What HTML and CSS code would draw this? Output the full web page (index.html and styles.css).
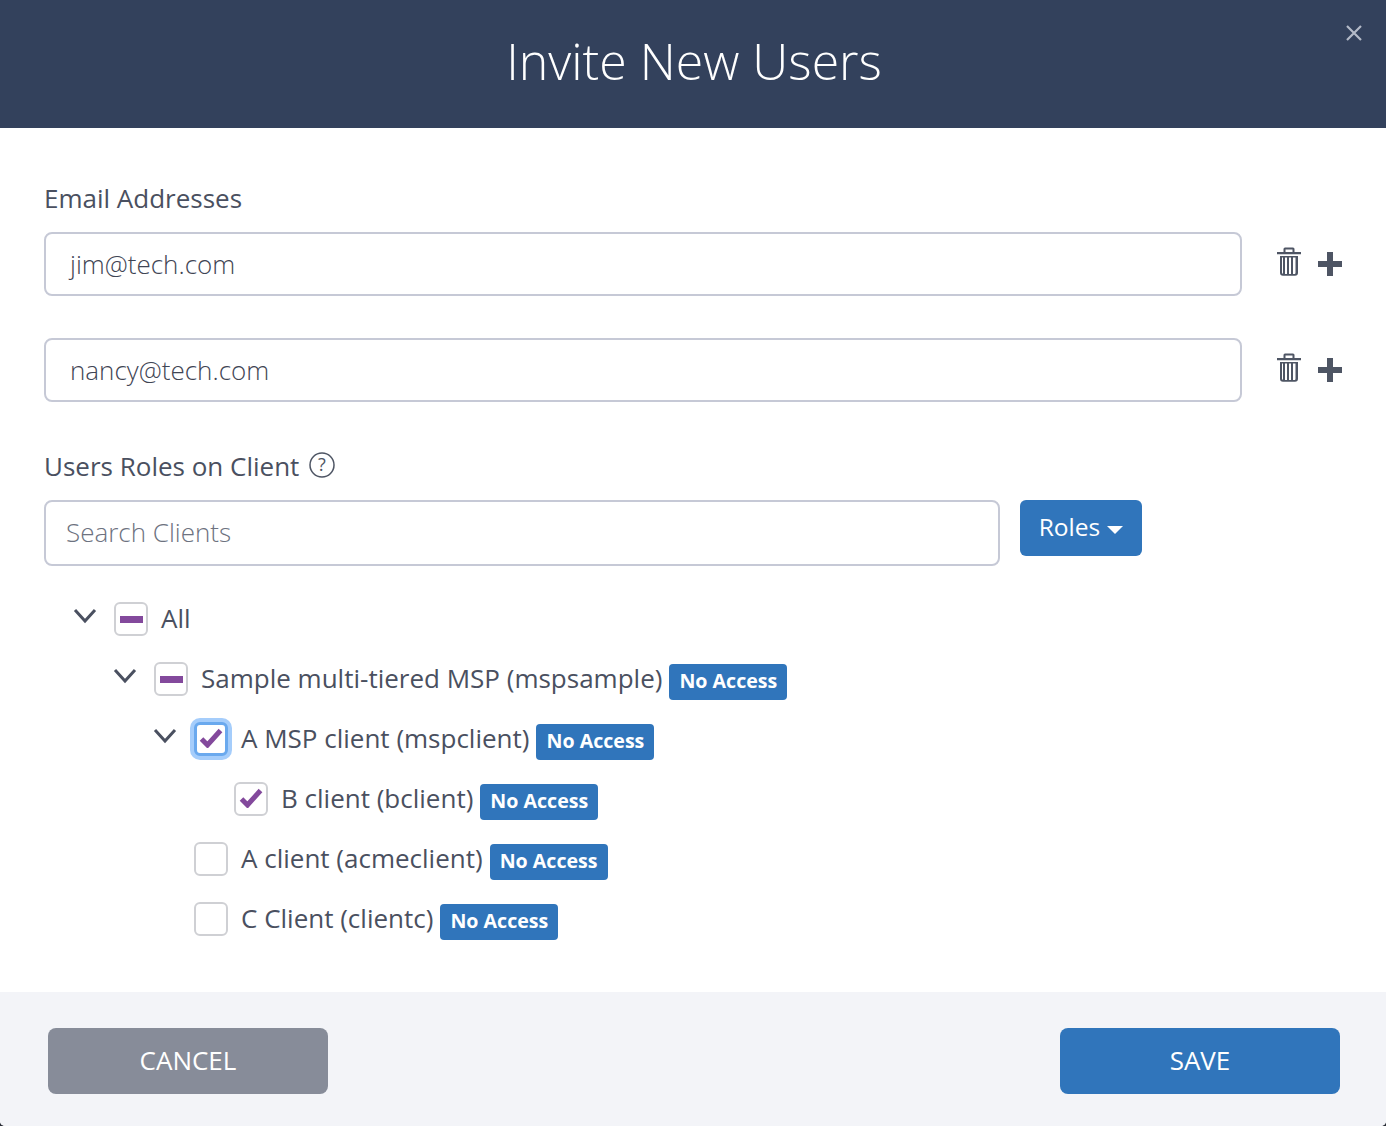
FILE: index.html
```html
<!DOCTYPE html>
<html lang="en">
<head>
<meta charset="utf-8">
<title>Invite New Users</title>
<link rel="stylesheet" href="styles.css">
</head>
<body>
<div class="modal">
  <header class="modal-head">
    <h1>Invite New Users</h1>
    <button class="close" aria-label="Close"><svg viewBox="0 0 16 16" width="16" height="16"><path d="M1 1L15 15M15 1L1 15"/></svg></button>
  </header>
  <main class="modal-body">
    <label class="field-label label-email">Email Addresses</label>
    <div class="email-row">
      <div class="input email-input">jim@tech.com</div>
      <svg class="trash" viewBox="0 0 24 30" width="24" height="30"><use href="#i-trash"/></svg>
      <svg class="plus" viewBox="0 0 24 24" width="24" height="24"><path d="M9 0h6v9h9v6h-9v9H9v-9H0V9h9z"/></svg>
    </div>
    <div class="email-row">
      <div class="input email-input">nancy@tech.com</div>
      <svg class="trash" viewBox="0 0 24 30" width="24" height="30"><use href="#i-trash"/></svg>
      <svg class="plus" viewBox="0 0 24 24" width="24" height="24"><path d="M9 0h6v9h9v6h-9v9H9v-9H0V9h9z"/></svg>
    </div>
    <div class="field-label label-roles">Users Roles on Client
      <svg class="help" viewBox="0 0 26 26" width="26" height="26"><circle cx="13" cy="13" r="12"/><text x="13" y="19" text-anchor="middle">?</text></svg>
    </div>
    <div class="search-row">
      <div class="input search-input">Search Clients</div>
      <button class="roles-btn">Roles<span class="caret"></span></button>
    </div>
    <ul class="tree">
      <li class="node lvl0"><svg class="chev" viewBox="0 0 24 16" width="24" height="16"><path d="M2 2l10 11L22 2"/></svg><span class="cb"><span class="dash"></span></span><span class="name">All</span></li>
      <li class="node lvl1"><svg class="chev" viewBox="0 0 24 16" width="24" height="16"><path d="M2 2l10 11L22 2"/></svg><span class="cb"><span class="dash"></span></span><span class="name">Sample multi-tiered MSP (mspsample)</span><span class="badge">No Access</span></li>
      <li class="node lvl2"><svg class="chev" viewBox="0 0 24 16" width="24" height="16"><path d="M2 2l10 11L22 2"/></svg><span class="cb focus"><svg class="tick" viewBox="0 0 24 20" width="24" height="20"><path d="M2.500 11l6 6L21.500 2.500"/></svg></span><span class="name">A MSP client (mspclient)</span><span class="badge">No Access</span></li>
      <li class="node lvl3"><span class="cb"><svg class="tick" viewBox="0 0 24 20" width="24" height="20"><path d="M2.500 11l6 6L21.500 2.500"/></svg></span><span class="name">B client (bclient)</span><span class="badge">No Access</span></li>
      <li class="node lvl2b"><span class="cb"></span><span class="name">A client (acmeclient)</span><span class="badge">No Access</span></li>
      <li class="node lvl2b"><span class="cb"></span><span class="name">C Client (clientc)</span><span class="badge">No Access</span></li>
    </ul>
  </main>
  <footer class="modal-foot">
    <button class="btn btn-cancel">CANCEL</button>
    <button class="btn btn-save">SAVE</button>
  </footer>
</div>
<svg class="defs" width="0" height="0" aria-hidden="true"><defs>
  <g id="i-trash">
    <path class="t-fill" d="M8 .5h8a1.500 1.500 0 0 1 1.500 1.500v3h6.500v2.200H0V5h6.500V2A1.500 1.500 0 0 1 8 .5zM8.500 2.500v2.500h7V2.500z" fill-rule="evenodd"/>
    <path class="t-fill" d="M3 9h18v16.700a3 3 0 0 1-3 3H6a3 3 0 0 1-3-3zM5 10.500V25.500a1.500 1.500 0 0 0 1 1.400V10.500zM8 10.500V27h2V10.500zM12 10.500V27h2V10.500zM16 10.500V27h2V10.500zM18.500 10.500V26.900a1.500 1.500 0 0 0 .5-1.400V10.500z" fill-rule="evenodd"/>
  </g>
</defs></svg>
</body>
</html>
```
FILE: styles.css
```css
* { box-sizing: border-box; }
html, body { margin: 0; padding: 0; background: #2b2f38; }
body { font-family: "Open Sans", "Liberation Sans", sans-serif; color: #4a5060; width: 1386px; height: 1126px; overflow: hidden; }
.defs { position: absolute; }
.t-fill { fill: #4e5564; }

.modal { width: 1386px; height: 1126px; display: flex; flex-direction: column; background: #fff; border-radius: 0 0 5px 5px; }
.modal-head { position: relative; height: 128px; flex: none; background: #33415c; display: flex; align-items: center; justify-content: center; }
.modal-head h1 { margin: 0 0 6px 2px; font-size: 50px; font-weight: 300; line-height: 68px; color: #fff; }
.close { position: absolute; right: 24px; top: 25px; padding: 0; border: 0; background: none; width: 16px; height: 16px; display: block; }
.close svg { display: block; fill: none; stroke: #b4bac8; stroke-width: 2.200; }

.modal-body { flex: 1; padding: 0 44px; }
.field-label { font-size: 26px; line-height: 36px; color: #4a5060; display: flex; align-items: center; }
.label-email { margin-top: 52px; margin-bottom: 16px; }
.label-roles { margin-top: 46px; margin-bottom: 16px; }
.help { margin-left: 10px; margin-top: -2px; fill: none; stroke: #4e5564; stroke-width: 1.500; }
.help text { font-size: 18px; fill: #4e5564; stroke: none; font-family: "Open Sans", sans-serif; }

.input { background: #fff; border: 2px solid #c6c9d6; border-radius: 8px; font-size: 26px; display: flex; align-items: center; }
.email-row { display: flex; align-items: center; margin-bottom: 42px; }
.email-input { width: 1198px; height: 64px; padding-left: 24px; font-weight: 300; color: #3f4554; }
.trash { margin-left: 35px; margin-top: -4px; }
.plus { margin-left: 17px; margin-top: 0; fill: #4e5564; }

.search-row { display: flex; align-items: flex-start; gap: 20px; }
.search-input { width: 956px; height: 66px; padding-left: 20px; padding-bottom: 2px; font-weight: 300; color: #6d7280; }
.roles-btn { width: 122px; height: 56px; border: 0; border-radius: 6px; background: #3075bb; color: #fff; font: 400 24.500px/36px "Open Sans", sans-serif; padding: 0 0 2px; display: flex; align-items: center; justify-content: center; }
.caret { width: 0; height: 0; margin-left: 7px; margin-top: 5px; border-left: 8px solid transparent; border-right: 8px solid transparent; border-top: 8px solid #fff; }

.tree { list-style: none; margin: 22px 0 0; padding: 0; }
.node { height: 60px; display: flex; align-items: flex-start; padding-top: 14px; }
.lvl0 { padding-left: 29px; }
.lvl1 { padding-left: 69px; }
.lvl2 { padding-left: 109px; }
.lvl3 { padding-left: 190px; }
.lvl2b { padding-left: 150px; }
.chev { flex: none; margin-top: 6px; margin-right: 17px; fill: none; stroke: #4a5060; stroke-width: 3; }
.cb { flex: none; width: 34px; height: 34px; border: 2px solid #cfd0d4; border-radius: 6px; background: #fff; display: flex; align-items: center; justify-content: center; }
.cb.focus { border: 3px solid #6aa9ee; box-shadow: 0 0 0 4px #a5cdfb; }
.dash { width: 23px; height: 7px; background: #83499c; margin-left: 1px; flex: none; }
.tick { fill: none; stroke: #83499c; stroke-width: 5; margin-top: -3px; flex: none; }
.name { font-size: 26px; line-height: 36px; margin-left: 13px; margin-top: -2px; color: #4a5060; }
.badge { height: 36px; margin-left: 7px; margin-top: 2px; padding: 0 10px; border-radius: 4px; background: #3075bb; color: #fff; font-size: 19.600px; font-weight: 700; line-height: 33px; }

.modal-foot { flex: none; height: 134px; background: #f3f4f8; display: flex; justify-content: space-between; align-items: flex-start; padding: 36px 46px 0 48px; border-radius: 0 0 5px 5px; }
.btn { width: 280px; height: 66px; border: 0; border-radius: 8px; color: #fff; font: 400 26px/36px "Open Sans", sans-serif; padding: 0 0 3px; }
.btn-cancel { background: #878c99; }
.btn-save { background: #3075bb; }
```
